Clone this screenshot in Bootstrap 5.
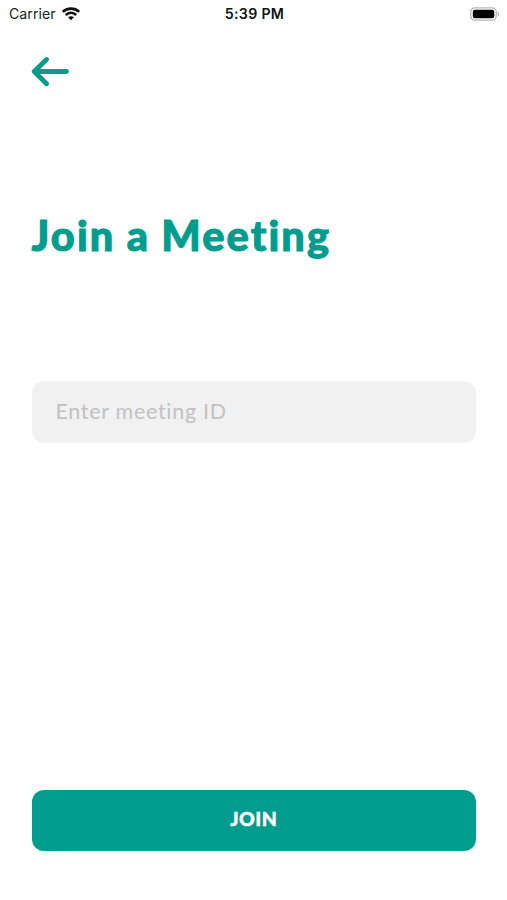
<!DOCTYPE html>
<html lang="en">
<head>
<meta charset="utf-8">
<meta name="viewport" content="width=device-width, initial-scale=1">
<title>Join a Meeting</title>
<link href="https://cdn.jsdelivr.net/npm/bootstrap@5.3.0/dist/css/bootstrap.min.css" rel="stylesheet">
<style>
  :root { --teal: #009d8f; }
  body { font-family: Lato, sans-serif; }
  .screen { height: 900px; overflow: hidden; }
  .status-bar { height: 28px; padding: 0 7px 0 9px; font-family: Inter, sans-serif; font-size: 14.2px; line-height: 28px; color: #222; }
  .status-bar > * { flex: 1 1 0; }
  .carrier { gap: 6px; }
  .clock { font-weight: 600; letter-spacing: .3px; color: #111; }
  .content { padding: 0 31px 49px 31.5px; }
  .back { margin-top: 28px; margin-left: -1px; height: 32px; color: var(--teal); }
  .title { margin: 121px 0 0; height: 52px; font-size: 41.5px; line-height: 52px; font-weight: 900; letter-spacing: 2.1px; word-spacing: -.7px; -webkit-text-stroke: 1px var(--teal); color: var(--teal); white-space: nowrap; }
  .meeting-id, .meeting-id:focus { margin-top: 120px; height: 62px; padding: 0 24px 2px; border-radius: 12px; background: #f1f1f1; font-size: 21.5px; letter-spacing: .7px; }
  .meeting-id::placeholder { color: #c1c1c1; opacity: 1; }
  .join { height: 61px; border-radius: 12px; padding: 0 0 4px; font-size: 19.5px; font-weight: 900; letter-spacing: .5px; -webkit-text-stroke: .4px #fff; --bs-btn-color: #fff; --bs-btn-bg: var(--teal); --bs-btn-hover-color: #fff; --bs-btn-hover-bg: #008a7e; }
</style>
</head>
<body class="bg-white">
<div class="screen d-flex flex-column">
  <header class="status-bar d-flex align-items-center">
    <div class="carrier d-flex align-items-center">
      <span>Carrier</span>
      <svg width="18" height="14" viewBox="0 0 18 14" fill="none" stroke="#111" stroke-width="2.6" aria-hidden="true">
        <path d="M.8 4.800C5.500.5 12.500.5 17.200 4.800"/>
        <path d="M3.700 8C6.800 5.100 11.200 5.100 14.300 8"/>
        <path d="M9 13.300 6.100 10.300C7.800 8.800 10.200 8.800 11.900 10.300Z" fill="#111" stroke="none"/>
      </svg>
    </div>
    <div class="clock text-center">5:39 PM</div>
    <div class="d-flex justify-content-end">
      <svg width="30" height="14" viewBox="0 0 30 14" aria-hidden="true">
        <rect x=".8" y=".8" width="25.400" height="12.400" rx="4" fill="#fff" stroke="#b5b5b5" stroke-width="1.300"/>
        <rect x="2.800" y="2.700" width="21.500" height="8.600" rx="2.200" fill="#000"/>
        <path d="M27.700 4.800c2 .7 2 3.700 0 4.400z" fill="#b5b5b5"/>
      </svg>
    </div>
  </header>
  <main class="content d-flex flex-column flex-grow-1">
    <a href="#" class="back d-flex align-self-start" aria-label="Back">
      <svg width="38" height="32" viewBox="0 0 38 32" fill="none" stroke="currentColor" stroke-width="4.800" stroke-linecap="round" stroke-linejoin="round">
        <path d="M35.500 15.500H3.500M15.500 3.500 3.200 15.500 15.500 27.800"/>
      </svg>
    </a>
    <h1 class="title">Join a Meeting</h1>
    <input type="text" class="meeting-id form-control border-0 shadow-none" placeholder="Enter meeting ID" aria-label="Meeting ID">
    <button type="button" class="join btn border-0 w-100 mt-auto">JOIN</button>
  </main>
</div>
<script src="https://cdn.jsdelivr.net/npm/bootstrap@5.3.0/dist/js/bootstrap.bundle.min.js"></script>
</body>
</html>
